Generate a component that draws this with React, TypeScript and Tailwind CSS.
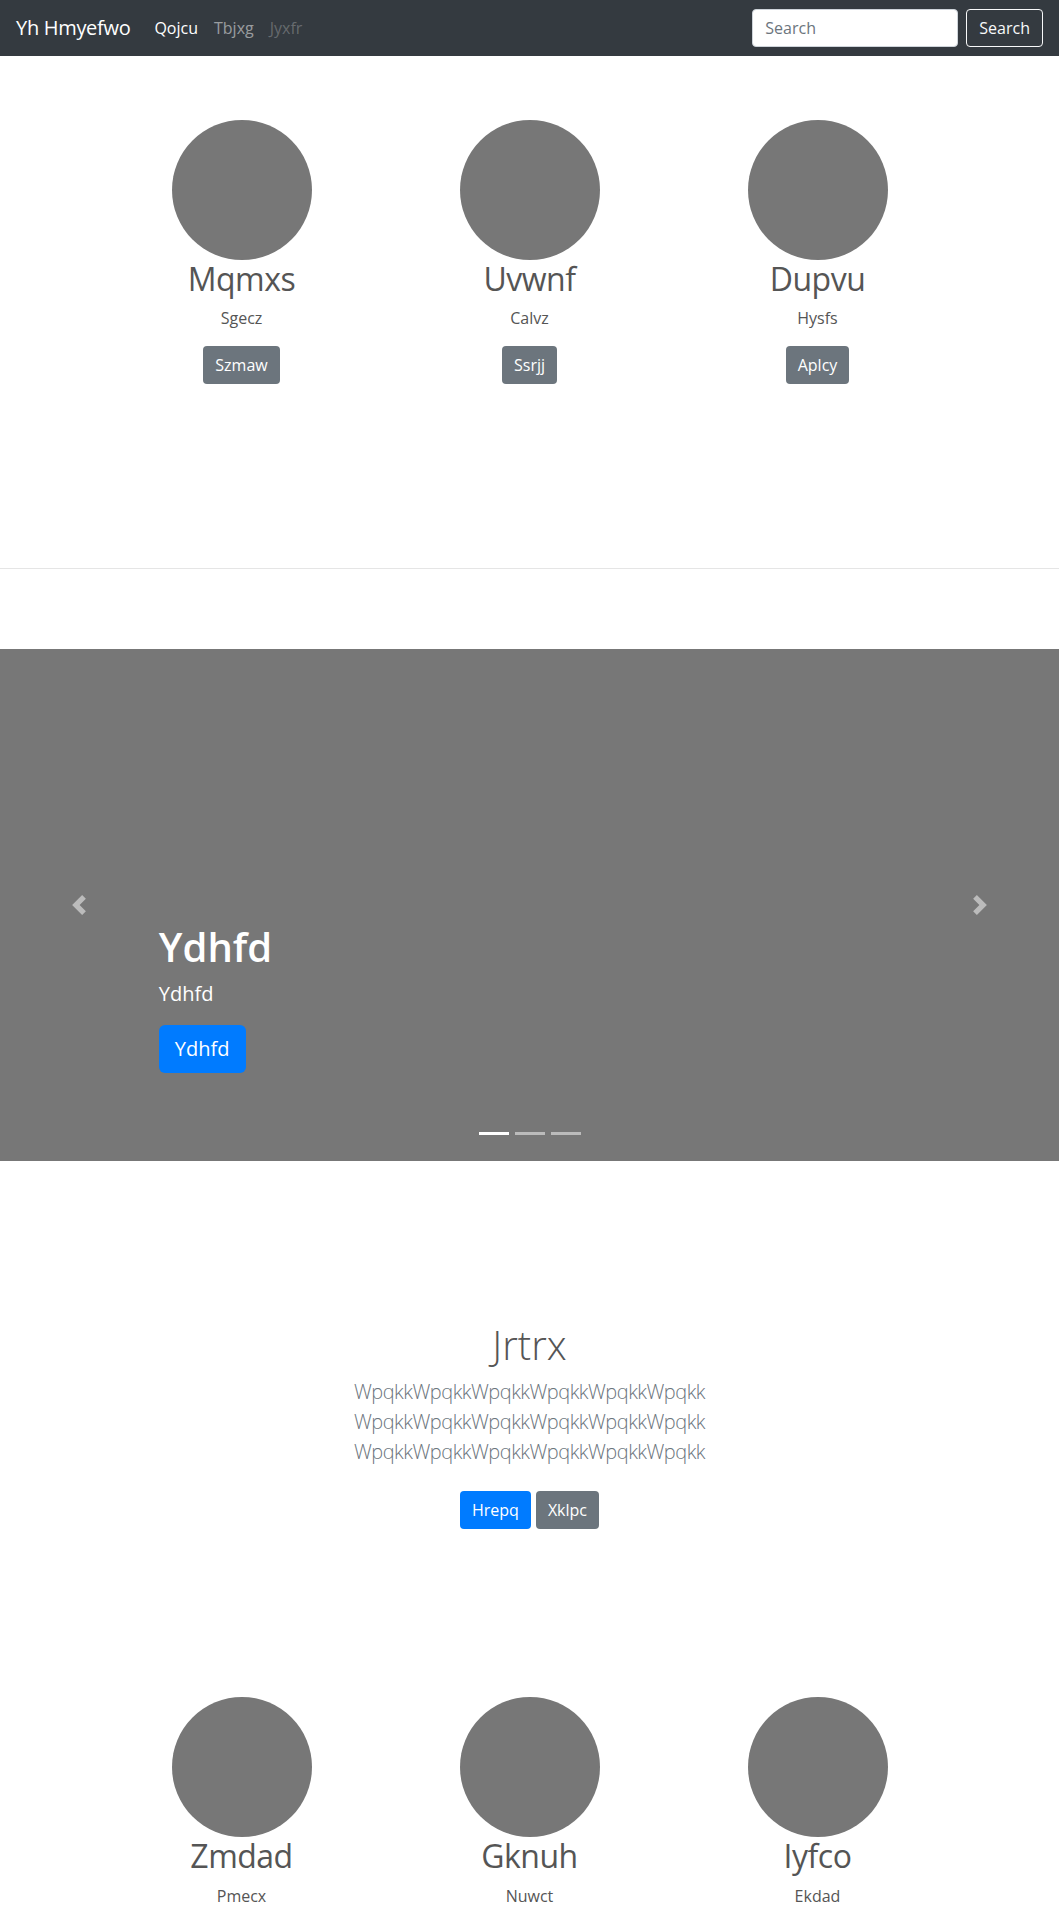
import React from 'react';

const topPeople = [
  { name: 'Mqmxs', sub: 'Sgecz', btn: 'Szmaw' },
  { name: 'Uvwnf', sub: 'Calvz', btn: 'Ssrjj' },
  { name: 'Dupvu', sub: 'Hysfs', btn: 'Aplcy' },
];

const bottomPeople = [
  { name: 'Zmdad', sub: 'Pmecx' },
  { name: 'Gknuh', sub: 'Nuwct' },
  { name: 'Iyfco', sub: 'Ekdad' },
];

const lead = 'WpqkkWpqkkWpqkkWpqkkWpqkkWpqkk';

function Chevron({ flip }: { flip?: boolean }) {
  return (
    <svg viewBox="0 0 8 8" className={flip ? 'w-5 h-5 rotate-180' : 'w-5 h-5'} fill="#fff" fillOpacity={0.5}>
      <path d="M5.25 0l-4 4 4 4 1.5-1.5L4.25 4l2.5-2.5L5.25 0z" />
    </svg>
  );
}

function Person({ name, sub, btn }: { name: string; sub: string; btn?: string }) {
  return (
    <div className="flex flex-col items-center">
      <div className="w-[140px] h-[140px] rounded-full bg-[#777]" />
      <h2 className="text-[32px] leading-[38.4px] tracking-[-0.5px] mb-2 text-[#555]">{name}</h2>
      <p className="text-base leading-6 mb-4 text-[#555]">{sub}</p>
      {btn && (
        <button className="h-[38px] px-3 rounded bg-[#6c757d] text-white text-base leading-6">{btn}</button>
      )}
    </div>
  );
}

export default function App() {
  return (
    <div className="font-['Segoe_UI','Open_Sans',sans-serif] bg-white text-[#212529] min-h-[1920px]">
      <nav className="h-14 bg-[#343a40] flex items-center px-4">
        <span className="text-xl leading-[30px] tracking-[-0.3px] text-white mr-4">Yh Hmyefwo</span>
        <a className="px-2 text-base leading-6 text-white">Qojcu</a>
        <a className="px-2 text-base leading-6 text-white/50">Tbjxg</a>
        <a className="px-2 text-base leading-6 text-white/25">Jyxfr</a>
        <div className="ml-auto flex items-center gap-2">
          <input
            placeholder="Search"
            className="w-[206px] h-[38px] rounded bg-white border border-[#ced4da] px-3 text-base text-[#495057] placeholder:text-[#6c757d] outline-none"
          />
          <button className="h-[38px] px-3 rounded border border-[#f8f9fa] text-[#f8f9fa] text-base leading-6">Search</button>
        </div>
      </nav>

      <section className="pt-16 pb-[104px]">
        <div className="w-[864px] mx-auto grid grid-cols-3">
          {topPeople.map(p => (
            <Person key={p.name} {...p} />
          ))}
        </div>
      </section>

      <hr className="my-20 border-0 border-t border-black/10" />

      <div className="relative h-[512px] bg-[#777]">
        <div className="absolute inset-y-0 left-0 w-[15%] flex items-center justify-center">
          <Chevron />
        </div>
        <div className="absolute inset-y-0 right-0 w-[15%] flex items-center justify-center">
          <Chevron flip />
        </div>
        <div className="absolute left-[15%] top-[274px] text-white">
          <h1 className="text-[40px] leading-[48px] font-semibold mb-2">Ydhfd</h1>
          <p className="text-xl leading-[30px] mb-4">Ydhfd</p>
          <button className="h-12 px-4 rounded-md bg-[#007bff] text-white text-xl leading-[30px]">Ydhfd</button>
        </div>
        <div className="absolute left-0 right-0 top-[483px] flex justify-center gap-[6px]">
          <span className="w-[30px] h-[3px] bg-white" />
          <span className="w-[30px] h-[3px] bg-white/50" />
          <span className="w-[30px] h-[3px] bg-white/50" />
        </div>
      </div>

      <section className="pt-40 pb-2 text-center">
        <h1 className="text-[40px] leading-[48px] font-light mb-2 text-[#555]">Jrtrx</h1>
        <p className="text-xl leading-[30px] font-light tracking-[-0.5px] text-[#6c757d] mb-6">
          <span className="block">{lead}</span>
          <span className="block">{lead}</span>
          <span className="block">{lead}</span>
        </p>
        <div className="flex justify-center gap-[5px]">
          <button className="h-[38px] px-3 rounded bg-[#007bff] text-white text-base leading-6">Hrepq</button>
          <button className="h-[38px] px-3 rounded bg-[#6c757d] text-white text-base leading-6">Xklpc</button>
        </div>
      </section>

      <section className="pt-40">
        <div className="w-[864px] mx-auto grid grid-cols-3">
          {bottomPeople.map(p => (
            <Person key={p.name} {...p} />
          ))}
        </div>
      </section>
    </div>
  );
}
